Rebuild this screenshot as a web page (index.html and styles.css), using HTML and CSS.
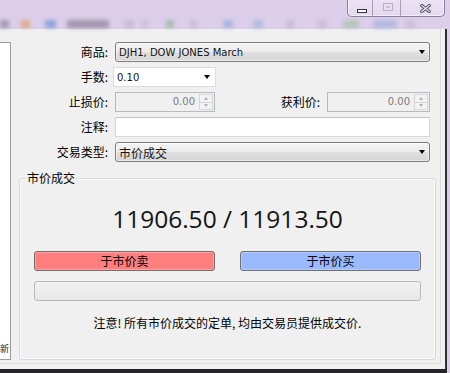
FILE: index.html
```html
<!DOCTYPE html>
<html lang="zh-CN">
<head>
<meta charset="utf-8">
<title>市价成交</title>
<link rel="stylesheet" href="styles.css">
</head>
<body>
<div class="screen">
  <div class="glass">
    <div class="blobs"></div>
    <div class="caption">
      <div class="cbtn cmin"><span class="min-glyph"></span></div>
      <div class="cbtn cmax"><span class="max-glyph"></span></div>
      <div class="cbtn cclose">
        <svg class="close-glyph" width="11" height="9" viewBox="0 0 11 9">
          <path d="M1.8 1.6 L9.2 7.4 M9.2 1.6 L1.8 7.4" stroke="#5d5868" stroke-width="3.2" stroke-linecap="square" fill="none"/>
          <path d="M1.8 1.6 L9.2 7.4 M9.2 1.6 L1.8 7.4" stroke="#efebf3" stroke-width="1.2" stroke-linecap="square" fill="none"/>
        </svg>
      </div>
    </div>
  </div>
  <div class="window">
    <div class="chart"><span>新</span></div>
    <div class="main">
      <div class="form">
        <span class="lbl">商品:</span>
        <div class="select wide"><span class="val">DJH1, DOW JONES March</span><i class="arrow"></i></div>

        <span class="lbl">手数:</span>
        <div class="combo"><span class="val">0.10</span><i class="arrow"></i></div>

        <span class="lbl">止损价:</span>
        <div class="spin"><span class="num">0.00</span><span class="btns"><i class="up"></i><i class="down"></i></span></div>
        <span class="lbl lbl2">获利价:</span>
        <div class="spin"><span class="num">0.00</span><span class="btns"><i class="up"></i><i class="down"></i></span></div>

        <span class="lbl">注释:</span>
        <div class="input wide"></div>

        <span class="lbl">交易类型:</span>
        <div class="select wide"><span class="val cjk">市价成交</span><i class="arrow"></i></div>
      </div>

      <div class="group">
        <div class="gtitle">市价成交</div>
        <div class="price">11906.50 / 11913.50</div>
        <div class="actions">
          <div class="btn sell">于市价卖</div>
          <div class="btn buy">于市价买</div>
        </div>
        <div class="progress"></div>
        <div class="note">注意! 所有市价成交的定单, 均由交易员提供成交价.</div>
      </div>
    </div>
  </div>
</div>
</body>
</html>
```

FILE: styles.css
```css
* { box-sizing: border-box; }
html, body { margin: 0; padding: 0; }
body {
  width: 450px;
  height: 373px;
  overflow: hidden;
  background: linear-gradient(#ddcfeb, #d6cae4 60%, #d9cde7);
  font-family: "Noto Sans CJK SC", sans-serif;
  font-size: 12px;
  color: #000;
}
.screen { display: flex; flex-direction: column; height: 373px; }

/* glass title area */
.glass { height: 29px; flex: none; display: grid; }
.glass > * { grid-area: 1 / 1; }
.blobs {
  align-self: end;
  height: 8px;
  margin-bottom: 1px;
  opacity: .7;
  filter: blur(2.2px);
  background: linear-gradient(90deg,
    #8a8296 0 9px, transparent 9px 21px,
    #d9a05a 21px 30px, transparent 30px 45px,
    #6a8fd0 45px 56px, transparent 56px 67px,
    #857e92 67px 109px, transparent 109px 124px,
    #bdb3c9 124px 134px, transparent 134px 141px,
    #c4b9ce 141px 148px, transparent 148px 166px,
    #8fb494 166px 174px, transparent 174px 190px,
    #c0b5cb 190px 197px, transparent 197px 223px,
    #93a9d6 223px 233px, transparent 233px 253px,
    #9db2da 253px 263px, transparent 263px 287px,
    #bcb2c8 287px 294px, transparent 294px 317px,
    #c4b6cc 317px 327px, transparent 327px 343px,
    #a6bfa5 343px 359px, transparent 359px 373px,
    #9fb1dc 373px 397px, transparent 397px 405px,
    #c3b8d0 405px 415px, transparent 415px);
}
.caption {
  justify-self: end;
  align-self: start;
  margin: -1px 5px 0 0;
  display: flex;
  height: 18px;
  border: 1px solid #8a7e9a;
  border-top: none;
  border-radius: 0 0 5px 5px;
  background: linear-gradient(rgba(255,255,255,.42), rgba(255,255,255,.22));
  box-shadow: inset 1px 0 0 rgba(255,255,255,.55), inset -1px -1px 0 rgba(255,255,255,.55);
  overflow: hidden;
}
.cbtn { height: 17px; display: flex; align-items: flex-start; }
.cmin { width: 24px; }
.cmax { width: 28px; border-left: 1px solid #a99dba; }
.cclose { width: 44px; border-left: 1px solid #a99dba; }
.min-glyph {
  width: 10px; height: 4px;
  margin: 10px 0 0 9px;
  border: 1px solid #363338;
  background: #fff;
}
.max-glyph {
  width: 10px; height: 8px;
  margin: 4px 0 0 10px;
  border: 1px solid #b9aec8;
  box-shadow: inset 0 0 0 2px #e6e0ec, inset 0 0 0 3px #c9bfd5;
}
.close-glyph { margin: 5px 0 0 19px; }

/* dialog window */
.window {
  flex: 1;
  margin-right: 3px;
  display: flex;
  background: #f0f0f0;
  border-right: 2px solid #2f2f33;
  border-bottom: 4px solid #252527;
  box-shadow: inset -4px -5px 0 #f0f0f0, inset -5px -6px 0 #dadada;
}
.chart {
  width: 11px;
  height: 318px;
  margin-top: 13px;
  flex: none;
  background: #fff;
  border: 1px solid #9c9c9c;
  border-left: none;
  display: flex;
  align-items: flex-end;
  justify-content: flex-end;
  overflow: hidden;
  padding: 0 1px 4px 0;
  font-size: 9px;
  line-height: 12px;
  color: #222;
  white-space: nowrap;
}
.main { flex: 1; display: flex; flex-direction: column; min-width: 0; }

.form {
  display: grid;
  grid-template-columns: 95px 100px 112px 103px;
  grid-auto-rows: 20px;
  row-gap: 5px;
  padding: 13px 0 0 9px;
}
.lbl {
  grid-column: 1;
  text-align: right;
  padding-right: 7px;
  line-height: 20px;
  white-space: nowrap;
}
.lbl2 { grid-column: 3; }
.wide { grid-column: 2 / 5; }

.select, .combo {
  display: flex;
  align-items: center;
  justify-content: space-between;
  font-family: "DejaVu Sans", "Noto Sans CJK SC", sans-serif;
  font-size: 10px;
  color: #151515;
}
.select {
  border: 1px solid #7b7b7b;
  border-radius: 3px;
  background: linear-gradient(#f4f4f4, #ececec 48%, #dfdfdf 52%, #d6d6d6);
  box-shadow: inset 0 0 0 1px rgba(255,255,255,.55);
  padding: 0 4px 0 3px;
}
.combo {
  margin: 0 -1px 0 -2px;
  border: 1px solid #dcdcdc;
  background: #fff;
  padding: 0 5px 0 3px;
}
.val.cjk { font-family: "Noto Sans CJK SC", sans-serif; font-size: 12px; }
.arrow {
  width: 0; height: 0;
  border-left: 3.5px solid transparent;
  border-right: 3.5px solid transparent;
  border-top: 4px solid #000;
}

.spin {
  display: flex;
  border: 1px solid #b7bbbf;
  background: #f0f0f0;
}
.spin .num {
  flex: 1;
  text-align: right;
  padding-right: 4px;
  line-height: 18px;
  font-family: "DejaVu Sans", sans-serif;
  font-size: 10px;
  color: #7b7b7b;
}
.spin .btns {
  width: 14px;
  margin: 1px 1px 1px 0;
  display: flex;
  flex-direction: column;
  border: 1px solid #d6d6d6;
  background: #f3f3f3;
}
.spin .btns i {
  flex: 1;
  display: flex;
  align-items: center;
  justify-content: center;
}
.spin .btns i + i { border-top: 1px solid #d6d6d6; }
.spin .btns i::before {
  content: "";
  width: 0; height: 0;
  border-left: 2.5px solid transparent;
  border-right: 2.5px solid transparent;
}
.spin .btns .up::before { border-bottom: 3px solid #b0b0b0; }
.spin .btns .down::before { border-top: 3px solid #b0b0b0; }

.input {
  border: 1px solid #d8d8d8;
  border-top-color: #c6c6c6;
  background: #fff;
}

/* group box */
.group {
  margin: 16px 9px 0 8px;
  border: 1px solid #d3dbe0;
  border-radius: 3px;
  box-shadow: inset 0 0 0 1px #fafafa;
  padding: 0 14px 28px;
}
.gtitle {
  width: max-content;
  margin: -9px 0 0 -8px;
  padding: 0 1px;
  line-height: 16px;
  background: #f0f0f0;
}
.price {
  margin-top: 18px;
  text-align: center;
  font-family: "Open Sans", sans-serif;
  font-size: 24.5px;
  line-height: 30px;
  color: #141414;
}
.actions {
  display: grid;
  grid-template-columns: 1fr 1fr;
  column-gap: 25px;
  margin-top: 17px;
}
.btn {
  height: 20px;
  border: 1px solid #6f6f6f;
  border-radius: 3px;
  text-align: center;
  line-height: 18px;
  box-shadow: inset 0 0 0 1px rgba(255,255,255,.28);
}
.sell { background: #ff7f7f; }
.buy { background: #9ab9ff; }
.progress {
  margin-top: 10px;
  height: 20px;
  border: 1px solid #bababa;
  border-radius: 3px;
  background: linear-gradient(#f2f2f2, #e7e7e7);
}
.note {
  margin-top: 14px;
  text-align: center;
  line-height: 16px;
}
```
